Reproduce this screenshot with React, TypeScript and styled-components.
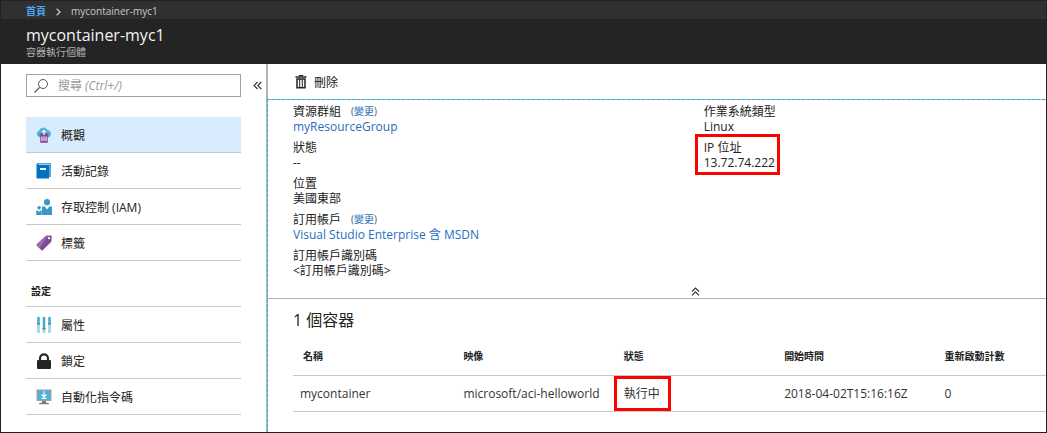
import React from "react";
import styled, { createGlobalStyle, css } from "styled-components";

const GlobalStyle = createGlobalStyle`
  *, *::before, *::after { box-sizing: border-box; }
  body {
    margin: 0;
    background: #fff;
    color: #222;
    font-family: "Open Sans", "Noto Sans CJK TC", sans-serif;
    font-size: 12px;
    line-height: 15px;
  }
  button, input { font: inherit; color: inherit; }
  ul, dl, dd, h1, h2, p { margin: 0; padding: 0; }
  ul { list-style: none; }
  a { text-decoration: none; }
`;

const Page = styled.div`
  display: flex;
  flex-direction: column;
  min-height: 100vh;
  border: 1px solid #222;
  border-top: 0;
`;

const Breadcrumb = styled.nav`
  display: flex;
  align-items: center;
  gap: 10px;
  height: 19px;
  padding: 3px 25px 0;
  background: #303030;
  border-top: 1px solid #222;
  color: #c8c8c8;
  font-size: 10px;
`;

const HomeLink = styled.a`
  color: #4aa3ec;
  font-weight: 600;
`;

const Header = styled.header`
  height: 45px;
  padding: 5px 25px 0;
  background: #242424;
`;

const Title = styled.h1`
  color: #f2f2f2;
  font-size: 16px;
  font-weight: 400;
  line-height: 22px;
`;

const Subtitle = styled.p`
  color: #b0b0b0;
  font-size: 10px;
  line-height: 12px;
`;

const Body = styled.div`
  display: flex;
  flex: 1;
`;

const Sidebar = styled.aside`
  flex: 0 0 266px;
  padding: 10px 0 0 25px;
  border-right: 1px solid #b4b4b4;
`;

const SearchRow = styled.div`
  display: flex;
  align-items: center;
  gap: 12px;
`;

const SearchBox = styled.label`
  display: flex;
  align-items: center;
  gap: 9px;
  width: 215px;
  height: 23px;
  padding: 0 6px;
  border: 1px solid #a0a0a0;
`;

const SearchInput = styled.input`
  flex: 1;
  min-width: 0;
  padding: 0;
  border: 0;
  outline: 0;
  background: transparent;
  font-size: 12px;

  &::placeholder {
    color: #999;
    opacity: 1;
    font-style: italic;
    font-synthesis-style: none;
  }
`;

const IconButton = styled.button`
  display: flex;
  align-items: center;
  justify-content: center;
  padding: 0;
  border: 0;
  background: none;
`;

const Menu = styled.ul<{ $first?: boolean }>`
  width: 215px;
  ${(p) => (p.$first ? "margin-top: 20px;" : "border-top: 1px solid #c8c8c8;")}
`;

const MenuLink = styled.a<{ $active?: boolean }>`
  display: flex;
  align-items: center;
  gap: 9px;
  height: 36px;
  padding-left: 10px;
  border-bottom: 1px solid #c8c8c8;
  background: ${(p) => (p.$active ? "#d9ecfd" : "none")};
  color: #222;
`;

const Label = styled.span`
  padding-top: 2px;
`;

const MenuHeading = styled.h2`
  padding: 22px 5px 7px;
  font-size: 10px;
  font-weight: 700;
  line-height: 16px;
`;

const Main = styled.main`
  display: flex;
  flex: 1;
  flex-direction: column;
  min-width: 0;
`;

const Toolbar = styled.div`
  display: flex;
  align-items: center;
  height: 35px;
  padding-left: 25px;
  border-left: 1px solid #b4b4b4;
`;

const ToolButton = styled(IconButton)`
  gap: 5px;
`;

const Blade = styled.div`
  flex: 1;
  padding: 1px 0 0 1px;
  background-image:
    repeating-linear-gradient(to right, #14b8ea 0 3px, #b4b4b4 3px 5px),
    repeating-linear-gradient(to bottom, #14b8ea 0 3px, #b4b4b4 3px 5px);
  background-size: 100% 1px, 1px 100%;
  background-repeat: no-repeat;
`;

const Essentials = styled.section`
  border-bottom: 1px solid #b0b0b0;
`;

const Columns = styled.div`
  display: grid;
  grid-template-columns: 6fr 5fr;
  padding: 4px 0 0 25px;
`;

const Fields = styled.dl`
  display: flex;
  flex-direction: column;
  align-items: flex-start;
  gap: 6px;
`;

const highlight = css`
  position: relative;
  &::after {
    content: "";
    position: absolute;
    border: 3px solid #fe0000;
    pointer-events: none;
  }
`;

const Field = styled.div<{ $marked?: boolean }>`
  dt {
    display: flex;
    align-items: center;
    height: 15px;
  }

  dd {
    height: 15px;
  }

  ${(p) =>
    p.$marked &&
    css`
      ${highlight}
      &::after { inset: -6px -5px -5px -9px; }
    `}
`;

const Link = styled.a`
  color: #2a6ebb;
`;

const Change = styled.span`
  margin-left: 10px;
  font-size: 10px;
  color: #555;
`;

const CollapseRow = styled.div`
  display: flex;
  justify-content: center;
  height: 20px;
  padding: 6px 0 0 76px;
`;

const Containers = styled.section`
  padding-left: 25px;
`;

const SectionTitle = styled.h2`
  padding-top: 11px;
  font-size: 16px;
  font-weight: 400;
  line-height: 20px;
`;

const Table = styled.table`
  width: 100%;
  border-collapse: separate;
  border-spacing: 0;
  table-layout: fixed;
  margin-top: 8px;
`;

const HeadCell = styled.th`
  width: 21.3%;
  height: 38px;
  padding: 0 0 0 10px;
  border-bottom: 1px solid #c8c8c8;
  font-size: 10px;
  font-weight: 700;
  text-align: left;

  &:last-child { width: auto; }
`;

const Cell = styled.td`
  height: 36px;
  padding: 0 0 0 10px;
  border-bottom: 1px solid #c8c8c8;
  color: #333;

  &:first-child { padding-left: 7px; }
`;

const Status = styled.span`
  ${highlight}
  &::after { inset: -9px -11px -9px -10px; }
`;

const Svg = ({ children, size = 16 }: { children: React.ReactNode; size?: number }) => (
  <svg width={size} height={size} viewBox="0 0 16 16" fill="none" aria-hidden="true">
    {children}
  </svg>
);

const SearchIcon = () => (
  <Svg>
    <circle cx="10" cy="6" r="4.5" stroke="#555" />
    <path d="M6.7 9.3 1.5 14.5" stroke="#555" strokeWidth="1.2" />
  </Svg>
);

const ContainerIcon = () => (
  <Svg>
    <path d="M3.8 10.5A3.6 3.6 0 0 1 3 3.6 4.7 4.7 0 0 1 11.6 3 3.9 3.9 0 0 1 12.4 10.5Z" fill="#59b4d9" />
    <path d="M3.5 6.5h9v2h-.7v7.2H4.2V8.5h-.7Z" fill="#804998" />
    <path d="M5.9 9.5v4.500M8 9.500v4.500M10.100 9.500v4.500" stroke="#fff" strokeWidth="1" />
    <path d="M8 8V3.500M6.300 5.200 8 3.500l1.700 1.700" stroke="#fff" strokeWidth="1.200" />
  </Svg>
);

const LogIcon = () => (
  <Svg>
    <path d="M2 0h13v14H2z" fill="#59a5dc" />
    <path d="M2.500 1h11.500v1H2.500z" fill="#a9d0ef" />
    <path d="M.5.500H2.500V2H13v13.500H1.500Q.5 15.500.5 14.500Z" fill="#0072c6" />
    <path d="M4 5h6v2H4z" fill="#fff" />
  </Svg>
);

const AccessIcon = () => (
  <Svg>
    <circle cx="11" cy="3.200" r="3.100" fill="#3999c6" />
    <circle cx="3.100" cy="8.800" r="1.800" fill="#3999c6" />
    <path d="M6 7.400h2.800L11 10.400l2.200-3H16V16H6Z" fill="#3999c6" />
    <path d="M.2 11.500h1.600l1.300 1.600 1.300-1.600h1.300V16H.2Z" fill="#3999c6" />
  </Svg>
);

const TagIcon = () => (
  <Svg>
    <path d="M10 .8 15 .6Q15.800.700 15.700 1.500L15.300 6.700 6.700 15.300Q6.100 15.800 5.500 15.200L.7 10.400Q.2 9.800.8 9.200Z" fill="#804998" />
    <path d="M10 .8 12 .7 3.500 13.200.7 10.400Q.2 9.800.8 9.200Z" fill="#9a6bae" />
    <circle cx="13" cy="3.200" r="1.100" fill="#fff" />
  </Svg>
);

const PropertiesIcon = () => (
  <Svg>
    <path d="M1 0h3v16H1zM6.500 0h3v16h-3zM12 0h3v16h-3z" fill="#a8d8ed" />
    <path d="M1.500 0h2v6h-2zM7 0h2v11H7zM12.500 0h2v6h-2z" fill="#3fa9d8" />
    <path d="M1 6h3v1.500H1zM6.500 11h3v1.500h-3zM12 6h3v1.500h-3z" fill="#7a7a7a" />
  </Svg>
);

const LockIcon = () => (
  <Svg>
    <path d="M4 8V5.400a4 4 0 0 1 8 0V8" stroke="#252525" strokeWidth="2.200" />
    <rect x="1" y="7" width="14" height="9" rx="1" fill="#252525" />
  </Svg>
);

const ScriptIcon = () => (
  <Svg>
    <path d="M.5.500h15v11.500H.5z" fill="#a0a1a2" />
    <path d="M1.800 1.800h12.400v9H1.800z" fill="#48b2dc" />
    <path d="M8 2.200v5.600M5.500 5.500 8 8l2.500-2.500M5.500 9.400h5" stroke="#fff" strokeWidth="1.200" />
    <path d="M6 12h4v1.800h2.800V15.200H3.200v-1.400H6Z" fill="#7a7a7a" />
  </Svg>
);

const TrashIcon = () => (
  <Svg>
    <path d="M6 2.200V1.500h4v.7" stroke="#252525" />
    <path d="M2.500 3h11" stroke="#252525" strokeWidth="1.500" />
    <path d="M4 5v8.700h8V5Z" stroke="#252525" strokeWidth="1.500" />
    <path d="M6.700 5v8.500M9.300 5v8.500" stroke="#252525" strokeWidth="1" />
  </Svg>
);

const DoubleChevron = ({ up }: { up?: boolean }) => (
  <svg width="9" height="9" viewBox="0 0 9 9" fill="none" stroke="#333" strokeWidth="1.100" aria-hidden="true">
    <path d={up ? "M1 4.500 4.500 1 8 4.500M1 8.300 4.500 4.800 8 8.300" : "M4.500 1 1 4.500 4.500 8M8.300 1 4.800 4.500 8.300 8"} />
  </svg>
);

type Item = { label: string; Icon: React.FC; active?: boolean };

const general: Item[] = [
  { label: "概觀", Icon: ContainerIcon, active: true },
  { label: "活動記錄", Icon: LogIcon },
  { label: "存取控制 (IAM)", Icon: AccessIcon },
  { label: "標籤", Icon: TagIcon },
];

const settings: Item[] = [
  { label: "屬性", Icon: PropertiesIcon },
  { label: "鎖定", Icon: LockIcon },
  { label: "自動化指令碼", Icon: ScriptIcon },
];

const MenuList = ({ items, first }: { items: Item[]; first?: boolean }) => (
  <Menu $first={first}>
    {items.map(({ label, Icon, active }) => (
      <li key={label}>
        <MenuLink href="#" $active={active} aria-current={active ? "page" : undefined}>
          <Icon />
          <Label>{label}</Label>
        </MenuLink>
      </li>
    ))}
  </Menu>
);

const ChangeLink = () => (
  <Change>
    (<Link href="#">變更</Link>)
  </Change>
);

export default function App() {
  return (
    <>
      <GlobalStyle />
      <Page>
        <Breadcrumb aria-label="breadcrumb">
          <HomeLink href="#">首頁</HomeLink>
          <svg width="5" height="8" viewBox="0 0 5 8" fill="none" stroke="#c8c8c8" strokeWidth="1.300" aria-hidden="true">
            <path d="M.7.700 4 4 .7 7.300" />
          </svg>
          <span>mycontainer-myc1</span>
        </Breadcrumb>
        <Header>
          <Title>mycontainer-myc1</Title>
          <Subtitle>容器執行個體</Subtitle>
        </Header>
        <Body>
          <Sidebar>
            <SearchRow>
              <SearchBox>
                <SearchIcon />
                <SearchInput type="text" aria-label="搜尋" placeholder="搜尋 (Ctrl+/)" />
              </SearchBox>
              <IconButton type="button" aria-label="摺疊功能表">
                <DoubleChevron />
              </IconButton>
            </SearchRow>
            <MenuList items={general} first />
            <MenuHeading>設定</MenuHeading>
            <MenuList items={settings} />
          </Sidebar>
          <Main>
            <Toolbar>
              <ToolButton type="button">
                <TrashIcon />
                <Label>刪除</Label>
              </ToolButton>
            </Toolbar>
            <Blade>
              <Essentials>
                <Columns>
                  <Fields>
                    <Field>
                      <dt>資源群組<ChangeLink /></dt>
                      <dd><Link href="#">myResourceGroup</Link></dd>
                    </Field>
                    <Field>
                      <dt>狀態</dt>
                      <dd>--</dd>
                    </Field>
                    <Field>
                      <dt>位置</dt>
                      <dd>美國東部</dd>
                    </Field>
                    <Field>
                      <dt>訂用帳戶<ChangeLink /></dt>
                      <dd><Link href="#">Visual Studio Enterprise 含 MSDN</Link></dd>
                    </Field>
                    <Field>
                      <dt>訂用帳戶識別碼</dt>
                      <dd>&lt;訂用帳戶識別碼&gt;</dd>
                    </Field>
                  </Fields>
                  <Fields>
                    <Field>
                      <dt>作業系統類型</dt>
                      <dd>Linux</dd>
                    </Field>
                    <Field $marked>
                      <dt>IP 位址</dt>
                      <dd>13.72.74.222</dd>
                    </Field>
                  </Fields>
                </Columns>
                <CollapseRow>
                  <IconButton type="button" aria-label="摺疊基本資訊">
                    <DoubleChevron up />
                  </IconButton>
                </CollapseRow>
              </Essentials>
              <Containers>
                <SectionTitle>1 個容器</SectionTitle>
                <Table>
                  <thead>
                    <tr>
                      <HeadCell scope="col">名稱</HeadCell>
                      <HeadCell scope="col">映像</HeadCell>
                      <HeadCell scope="col">狀態</HeadCell>
                      <HeadCell scope="col">開始時間</HeadCell>
                      <HeadCell scope="col">重新啟動計數</HeadCell>
                    </tr>
                  </thead>
                  <tbody>
                    <tr>
                      <Cell>mycontainer</Cell>
                      <Cell>microsoft/aci-helloworld</Cell>
                      <Cell><Status>執行中</Status></Cell>
                      <Cell>2018-04-02T15:16:16Z</Cell>
                      <Cell>0</Cell>
                    </tr>
                  </tbody>
                </Table>
              </Containers>
            </Blade>
          </Main>
        </Body>
      </Page>
    </>
  );
}
